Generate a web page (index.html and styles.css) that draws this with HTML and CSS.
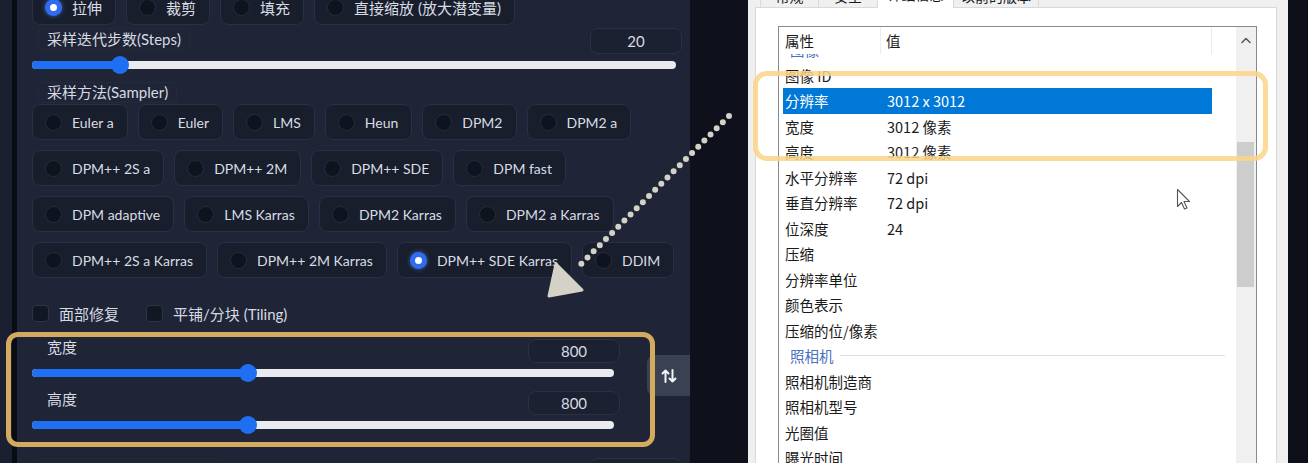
FILE: index.html
```html
<!DOCTYPE html>
<html lang="zh-CN">
<head>
<meta charset="utf-8">
<title>txt2img settings & image properties</title>
<link rel="stylesheet" href="styles.css">
</head>
<body>
<div class="screen">
  <div class="edge"></div>

  <section class="panel">
    <div class="radio-row resize">
      <label class="opt sel"><span class="dot"></span>拉伸</label>
      <label class="opt"><span class="dot"></span>裁剪</label>
      <label class="opt"><span class="dot"></span>填充</label>
      <label class="opt"><span class="dot"></span>直接缩放 (放大潜变量)</label>
    </div>

    <div class="slider-block steps">
      <div class="slider-head">
        <span class="tag">采样迭代步数(Steps)</span>
        <span class="num">20</span>
      </div>
      <div class="track"><div class="fill" style="width:13.7%"></div></div>
    </div>

    <div class="tag sampler-tag">采样方法(Sampler)</div>
    <div class="sampler">
      <div class="radio-row">
        <label class="opt"><span class="dot"></span>Euler a</label>
        <label class="opt"><span class="dot"></span>Euler</label>
        <label class="opt"><span class="dot"></span>LMS</label>
        <label class="opt"><span class="dot"></span>Heun</label>
        <label class="opt"><span class="dot"></span>DPM2</label>
        <label class="opt"><span class="dot"></span>DPM2 a</label>
      </div>
      <div class="radio-row">
        <label class="opt"><span class="dot"></span>DPM++ 2S a</label>
        <label class="opt"><span class="dot"></span>DPM++ 2M</label>
        <label class="opt"><span class="dot"></span>DPM++ SDE</label>
        <label class="opt"><span class="dot"></span>DPM fast</label>
      </div>
      <div class="radio-row">
        <label class="opt"><span class="dot"></span>DPM adaptive</label>
        <label class="opt"><span class="dot"></span>LMS Karras</label>
        <label class="opt"><span class="dot"></span>DPM2 Karras</label>
        <label class="opt"><span class="dot"></span>DPM2 a Karras</label>
      </div>
      <div class="radio-row">
        <label class="opt"><span class="dot"></span>DPM++ 2S a Karras</label>
        <label class="opt"><span class="dot"></span>DPM++ 2M Karras</label>
        <label class="opt sel"><span class="dot"></span>DPM++ SDE Karras</label>
        <label class="opt"><span class="dot"></span>DDIM</label>
      </div>
    </div>

    <div class="checks">
      <label class="chk"><span class="box"></span>面部修复</label>
      <label class="chk"><span class="box"></span>平铺/分块 (Tiling)</label>
    </div>

    <div class="dims">
      <div class="dims-col">
        <div class="slider-block">
          <div class="slider-head">
            <span class="tag plain">宽度</span>
            <span class="num">800</span>
          </div>
          <div class="track"><div class="fill" style="width:37.1%"></div></div>
        </div>
        <div class="slider-block">
          <div class="slider-head">
            <span class="tag plain">高度</span>
            <span class="num">800</span>
          </div>
          <div class="track"><div class="fill" style="width:37.1%"></div></div>
        </div>
      </div>
      <button class="swap" type="button" aria-label="swap">
        <svg width="16" height="16" viewBox="0 0 16 16" fill="none" stroke="#f3f4f6" stroke-width="2" stroke-linecap="round" stroke-linejoin="round">
          <path d="M4.5 14V2.5M1.5 5.5L4.5 2.5L7.5 5.5"/>
          <path d="M11.5 2V13.5M8.5 10.5L11.5 13.5L14.5 10.5"/>
        </svg>
      </button>
    </div>

    <div class="slider-head next">
      <span class="tag">提示词相关性(CFG Scale)</span>
      <span class="num">7</span>
    </div>
  </section>

  <div class="gap"></div>

  <section class="dialog">
    <div class="tabs">
      <span class="tab t1">常规</span>
      <span class="tab t2">安全</span>
      <span class="tab t3 active">详细信息</span>
      <span class="tab t4">以前的版本</span>
    </div>
    <div class="tabpage">
      <div class="listbox">
        <div class="list-main">
          <div class="list-head">
            <span class="h1">属性</span>
            <span class="h2">值</span>
            <span class="h3"></span>
          </div>
          <div class="list-body">
            <div class="row group"><span class="g">图像</span></div>
            <div class="row"><span class="k">图像 ID</span><span class="v"></span></div>
            <div class="row sel"><span class="k">分辨率</span><span class="v">3012 x 3012</span></div>
            <div class="row"><span class="k">宽度</span><span class="v">3012 像素</span></div>
            <div class="row"><span class="k">高度</span><span class="v">3012 像素</span></div>
            <div class="row"><span class="k">水平分辨率</span><span class="v">72 dpi</span></div>
            <div class="row"><span class="k">垂直分辨率</span><span class="v">72 dpi</span></div>
            <div class="row"><span class="k">位深度</span><span class="v">24</span></div>
            <div class="row"><span class="k">压缩</span><span class="v"></span></div>
            <div class="row"><span class="k">分辨率单位</span><span class="v"></span></div>
            <div class="row"><span class="k">颜色表示</span><span class="v"></span></div>
            <div class="row"><span class="k">压缩的位/像素</span><span class="v"></span></div>
            <div class="row group"><span class="g">照相机</span></div>
            <div class="row"><span class="k">照相机制造商</span><span class="v"></span></div>
            <div class="row"><span class="k">照相机型号</span><span class="v"></span></div>
            <div class="row"><span class="k">光圈值</span><span class="v"></span></div>
            <div class="row"><span class="k">曝光时间</span><span class="v"></span></div>
          </div>
        </div>
        <div class="scrollbar">
          <div class="sb-up">
            <svg width="10" height="7" viewBox="0 0 10 7" fill="none" stroke="#5a5a5a" stroke-width="1.6" stroke-linecap="round" stroke-linejoin="round"><path d="M1 5.5L5 1.5L9 5.5"/></svg>
          </div>
          <div class="sb-thumb"></div>
        </div>
      </div>
    </div>
  </section>

  <div class="rdark"></div>

  <div class="annot-gold"></div>
  <div class="annot-yellow"></div>

  <svg class="annot-arrow" width="1308" height="463" viewBox="0 0 1308 463">
    <line x1="729" y1="116" x2="576" y2="269" stroke="#d4d1c7" stroke-width="6" stroke-linecap="round" stroke-dasharray="0 8.7"/>
    <polygon points="556,264 549,296 582,290" fill="#d4d1c7" stroke="#d4d1c7" stroke-width="3" stroke-linejoin="round"/>
  </svg>

  <svg class="cursor" width="16" height="24" viewBox="0 0 16 24">
    <path d="M1.5 1.5V18.5L5.5 14.5L8.5 21L11 20L8 13.5H13.5Z" fill="#ffffff" stroke="#555" stroke-width="1.1" stroke-linejoin="round"/>
  </svg>
</div>
</body>
</html>
```

FILE: styles.css
```css
html, body {
  margin: 0;
  padding: 0;
  background: #0e111c;
}

.screen {
  position: relative;
  display: flex;
  width: 1308px;
  height: 463px;
  overflow: hidden;
  background: #0e111c;
  font-family: Lato, "Noto Sans CJK SC", sans-serif;
}

/* ---------- left dark edge ---------- */
.edge {
  flex: none;
  width: 17px;
  background: linear-gradient(to right, #1b2030 0, #1b2030 12px, #090c13 12px, #090c13 17px);
}

/* ---------- settings panel ---------- */
.panel {
  flex: none;
  width: 673px;
  box-sizing: border-box;
  padding-left: 15px;
  background: #1f2536;
  color: #d6dae1;
  font-size: 15px;
}

.radio-row {
  display: flex;
  gap: 10px;
  height: 36px;
}

.radio-row.resize {
  margin-top: -10px;
  height: 35px;
}

.sampler .opt {
  font-size: 14px;
}

.opt {
  display: flex;
  align-items: center;
  gap: 10px;
  height: 100%;
  box-sizing: border-box;
  padding: 0 13px 0 12px;
  background: #191e2c;
  border: 1px solid #283043;
  border-radius: 8px;
  white-space: nowrap;
  color: #d8dce3;
}

.dot {
  flex: none;
  width: 17px;
  height: 17px;
  box-sizing: border-box;
  border-radius: 50%;
  background: #0f131e;
  border: 1px solid #262d3d;
}

.opt.sel .dot {
  background: #ffffff;
  border: 5px solid #2f6cf0;
  box-shadow: 0 0 4px rgba(70, 130, 255, 0.7);
}

.slider-block.steps {
  margin-top: 3px;
  width: 650px;
}

.slider-head {
  display: flex;
  justify-content: space-between;
  align-items: flex-start;
  height: 26px;
}

.tag {
  display: block;
  width: fit-content;
  height: 22px;
  box-sizing: border-box;
  margin-left: 6px;
  padding: 0 8px;
  line-height: 20px;
  border: 1px solid #242a3a;
  border-radius: 4px;
  color: #d6dae1;
  white-space: nowrap;
}

.num {
  width: 92px;
  height: 26px;
  box-sizing: border-box;
  line-height: 24px;
  text-align: center;
  background: #1c2131;
  border: 1px solid #2a3143;
  border-radius: 8px;
  color: #d6dae1;
}

.track {
  display: flex;
  width: 644px;
  height: 8px;
  margin-top: 7px;
  border-radius: 4px;
  background: #e9ebef;
}

.fill {
  position: relative;
  height: 100%;
  border-radius: 4px 0 0 4px;
  background: #1f6ff3;
}

.fill::after {
  content: "";
  position: absolute;
  right: -9px;
  top: -5px;
  width: 18px;
  height: 18px;
  border-radius: 50%;
  background: #1f6ff3;
}

.sampler-tag {
  margin-top: 13px;
  height: 21px;
  line-height: 19px;
}

.sampler {
  display: flex;
  flex-direction: column;
  gap: 10px;
  margin-top: 1px;
}

/* ---------- checkboxes ---------- */
.checks {
  display: flex;
  align-items: center;
  gap: 27px;
  height: 17px;
  margin-top: 27px;
}

.chk {
  display: flex;
  align-items: center;
  gap: 10px;
  color: #d6dae1;
  white-space: nowrap;
}

.box {
  width: 17px;
  height: 17px;
  box-sizing: border-box;
  border-radius: 4px;
  background: #121724;
  border: 1px solid #2c3446;
}

/* ---------- width / height ---------- */
.dims {
  display: flex;
  margin-top: 17px;
}

.dims-col {
  width: 588px;
}

.dims .slider-block + .slider-block {
  margin-top: 14px;
}

.dims .slider-head {
  height: 24px;
}

.dims .tag.plain {
  height: 18px;
  line-height: 18px;
  margin-top: -2px;
  border-color: transparent;
}

.dims .num {
  height: 24px;
  line-height: 22px;
}

.dims .track {
  width: 582px;
  margin-top: 6px;
}

.swap {
  display: flex;
  align-items: center;
  justify-content: center;
  width: 43px;
  height: 41px;
  margin: 16px 0 0 27px;
  padding: 0;
  border: none;
  border-radius: 8px 0 0 8px;
  background: #3a4152;
}

.slider-head.next {
  width: 650px;
  margin-top: 29px;
}

.slider-head.next .tag {
  height: 30px;
  padding-top: 9px;
  overflow: hidden;
}

.slider-head.next .num {
  padding-top: 8px;
}

/* ---------- dark gap ---------- */
.gap {
  flex: none;
  width: 58px;
  background: #0e111c;
}

.rdark {
  flex: 1;
  background: #0c0f18;
}

/* ---------- Windows properties dialog ---------- */
.dialog {
  flex: none;
  display: flex;
  flex-direction: column;
  width: 540px;
  box-sizing: border-box;
  padding: 0 11px 0 7px;
  background: #f0f0f0;
  font-family: "Noto Sans CJK SC", "Noto Sans", sans-serif;
  font-size: 14.5px;
  color: #1a1a1a;
}

.tabs {
  display: flex;
  align-items: flex-end;
  height: 24px;
  margin-top: -17px;
  padding-left: 5px;
}

.tab {
  height: 22px;
  box-sizing: border-box;
  line-height: 20px;
  text-align: center;
  font-size: 14px;
  background: #f0f0f0;
  border: 1px solid #d9d9d9;
  border-bottom: none;
  margin-right: -1px;
}

.t1 { width: 59px; }
.t2 { width: 60px; }
.t3 { width: 77px; }
.t4 { width: 86px; }

.tab.active {
  height: 25px;
  margin-bottom: -1px;
  background: #ffffff;
  position: relative;
}

.tabpage {
  flex: 1;
  min-height: 0;
  box-sizing: border-box;
  padding: 18px 0 0 22px;
  background: #ffffff;
  border: 1px solid #d9d9d9;
  border-bottom: none;
}

.listbox {
  display: flex;
  width: 479px;
  height: 100%;
  box-sizing: border-box;
  border: 1px solid #858a92;
  border-bottom: none;
}

.list-main {
  flex: 1;
  display: flex;
  flex-direction: column;
  min-width: 0;
}

.list-head {
  display: flex;
  align-items: center;
  height: 27px;
  flex: none;
  position: relative;
  z-index: 1;
  background: #ffffff;
}

.list-head span {
  display: block;
  height: 100%;
  line-height: 27px;
  box-sizing: border-box;
}

.h1 {
  width: 102px;
  padding-left: 6px;
  border-right: 1px solid #ececec;
}

.h2 {
  width: 331px;
  padding-left: 5px;
  border-right: 1px solid #ececec;
}

.h3 {
  flex: 1;
}

.list-body {
  flex: 1;
  overflow: hidden;
}

.row {
  display: flex;
  align-items: center;
  height: 25.5px;
  width: 429px;
  margin-left: 4px;
  padding-left: 2px;
  box-sizing: border-box;
  white-space: nowrap;
}

.row:first-child {
  margin-top: -17px;
}

.row .k {
  width: 102px;
  flex: none;
}

.row.sel {
  background: #0078d7;
  color: #ffffff;
}

.row.group {
  width: 442px;
  padding-left: 7px;
  color: #4a6fbd;
}

.row.group::after {
  content: "";
  flex: 1;
  height: 1px;
  margin-left: 6px;
  background: #dedede;
}

.scrollbar {
  flex: none;
  width: 20px;
  display: flex;
  flex-direction: column;
  background: #f0f0f0;
}

.sb-up {
  display: flex;
  align-items: center;
  justify-content: center;
  height: 27px;
}

.sb-thumb {
  width: 17px;
  height: 145px;
  margin: 88px 0 0 1px;
  background: #cdcdcd;
}

/* ---------- annotations (overlays) ---------- */
.annot-gold {
  position: absolute;
  left: 6px;
  top: 332px;
  width: 649px;
  height: 115px;
  box-sizing: border-box;
  border: 5px solid #d4aa60;
  border-radius: 12px;
}

.annot-yellow {
  position: absolute;
  left: 753px;
  top: 71px;
  width: 515px;
  height: 90px;
  box-sizing: border-box;
  border: 5px solid rgba(252, 212, 135, 0.85);
  border-radius: 14px;
}

.annot-arrow {
  position: absolute;
  left: 0;
  top: 0;
}

.cursor {
  position: absolute;
  left: 1176px;
  top: 188px;
}
```
